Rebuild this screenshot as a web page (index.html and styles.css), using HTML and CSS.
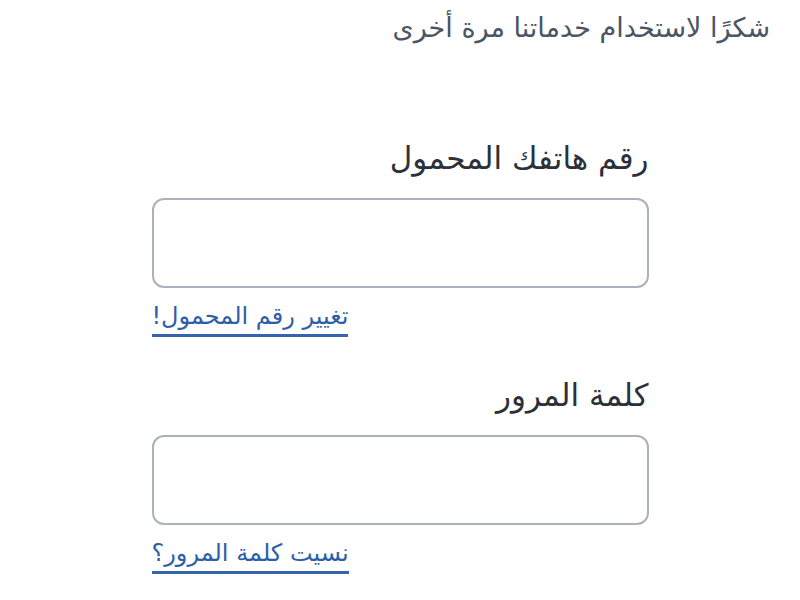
FILE: index.html
```html
<!DOCTYPE html>
<html lang="ar" dir="rtl">
<head>
<meta charset="utf-8">
<link rel="stylesheet" href="styles.css">
</head>
<body>
<header class="top">
  <p class="thanks">شكرًا لاستخدام خدماتنا مرة أخرى</p>
</header>
<main class="form">
  <div class="field">
    <label class="label">رقم هاتفك المحمول</label>
    <div class="input"></div>
    <a class="link" href="#">تغيير رقم المحمول!</a>
  </div>
  <div class="field second">
    <label class="label">كلمة المرور</label>
    <div class="input"></div>
    <a class="link" href="#">نسيت كلمة المرور؟</a>
  </div>
</main>
</body>
</html>
```

FILE: styles.css
```css
html, body {
  margin: 0;
  padding: 0;
  background: #ffffff;
  font-family: "DejaVu Sans", sans-serif;
}
.top {
  padding: 9px 30px 0 0;
}
.thanks {
  margin: 0;
  font-size: 27px;
  line-height: 38px;
  color: #4b5563;
}
.form {
  width: 497px;
  margin: 88px auto 0;
  display: flex;
  flex-direction: column;
}
.field {
  display: flex;
  flex-direction: column;
}
.second {
  margin-top: 35px;
}
.label {
  font-size: 31px;
  line-height: 46px;
  color: #2c3038;
  margin-bottom: 17px;
}
.input {
  height: 86px;
  border: 2px solid #aab2bb;
  border-radius: 12px;
}
.link {
  align-self: flex-end;
  margin-top: 10px;
  font-size: 24px;
  line-height: 36px;
  color: #2e5fa6;
  text-decoration: none;
  border-bottom: 3px solid #3565ad;
}
```
